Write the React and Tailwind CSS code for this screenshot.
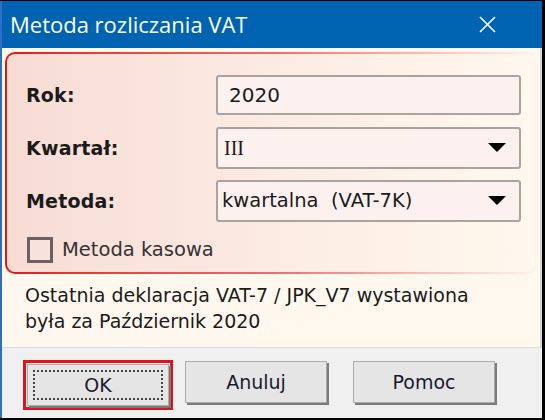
import React from "react";

const font = { fontFamily: "Tahoma, 'DejaVu Sans', sans-serif" };

function Arrow() {
  return (
    <svg width="18" height="10" viewBox="0 0 18 10" className="shrink-0">
      <polygon points="0,0 18,0 9,9" fill="#000" />
    </svg>
  );
}

function Field({ label, children, select, h }) {
  return (
    <div className={"flex items-center " + h}>
      <div className="w-[190px] text-[19px] font-bold text-[#1b1b1b] tracking-[0.2px]">{label}</div>
      <div className="flex items-center justify-between w-[305px] h-full border-2 border-[#a9a3a1] rounded-[3px] bg-[#fcf1ee] pl-[4px] pr-[13px]">
        {children}
        {select && <Arrow />}
      </div>
    </div>
  );
}

function Btn({ label, focused }) {
  const inner = (
    <div className="relative w-[142px] h-[42px] bg-[#e5e5e5] border border-[#adadad] shadow-[2px_2px_0_#7a7a7a] flex items-center justify-center text-[19px] text-[#1a1a2e]">
      {focused && (
        <div className="absolute inset-[5px] border-2 border-dotted border-[#444]" />
      )}
      <span className="relative">{label}</span>
    </div>
  );
  if (!focused) return inner;
  return <div className="border-[3px] border-[#e0121a] p-[1px]">{inner}</div>;
}

export default function App() {
  return (
    <div
      className="w-[545px] h-[420px] bg-black pt-[1px] pr-[3px] pb-[2px] flex flex-col"
      style={font}
    >
      <div className="flex-1 flex flex-col border-l-2 border-[#2d6fc2] bg-[#f0f0f0]">
        {/* title bar */}
        <div className="h-[47px] bg-[#0063b1] flex items-center justify-between pl-[8px] pr-[46px]">
          <span
            className="text-white text-[22px]"
            style={{ fontFamily: "'Segoe UI', 'Open Sans', 'Noto Sans', sans-serif" }}
          >
            Metoda rozliczania VAT
          </span>
          <svg width="17" height="17" viewBox="0 0 17 17">
            <path d="M1 1 L16 16 M16 1 L1 16" stroke="#fff" strokeWidth="1.6" />
          </svg>
        </div>

        {/* body */}
        <div className="h-[299px] bg-[#fff8ee] border-r-2 border-[#d9d6d0] pt-[4px] px-[3px]">
          <div className="rounded-[10px] p-[2px] bg-gradient-to-r from-[#e2141b] via-[#ef6a6a] to-[#fff3ea]">
            <div className="h-[218px] rounded-[8px] bg-gradient-to-r from-[#f7dcd4] via-[#fcebe3] to-[#fff8ee] pl-[19px] pt-[21px]">
              <div className="flex flex-col">
                <Field label="Rok:" h="h-[40px]">
                  <span className="text-[20px] text-[#1b1b1b] pl-[7px]">2020</span>
                </Field>
                <div className="h-[12px]" />
                <Field label="Kwartał:" select h="h-[42px]">
                  <span
                    className="text-[20px] text-[#1b1b1b] pl-[2px]"
                    style={{ fontFamily: "'Liberation Serif', serif" }}
                  >
                    III
                  </span>
                </Field>
                <div className="h-[11px]" />
                <Field label="Metoda:" select h="h-[42px]">
                  <span className="text-[19.5px] text-[#1b1b1b]">kwartalna&nbsp;&nbsp;(VAT-7K)</span>
                </Field>
              </div>
              <div className="flex items-center mt-[13px] ml-[1px]">
                <div className="w-[26px] h-[26px] border-[3px] border-[#6d5f60] bg-[#f8e2de]" />
                <span className="ml-[9px] text-[19.5px] text-[#333]">Metoda kasowa</span>
              </div>
            </div>
          </div>
          <div className="pl-[20px] pt-[8px] text-[19px] leading-[26px] text-[#1b1b1b]">
            <div>Ostatnia deklaracja VAT-7 / JPK_V7 wystawiona</div>
            <div>była za Październik 2020</div>
          </div>
        </div>

        {/* buttons */}
        <div className="flex-1 border-t border-[#dcdcdc] bg-[#f0f0f0] flex items-start pt-[12px] pl-[21px] gap-[12px]">
          <Btn label="OK" focused />
          <div className="pt-[1px] flex gap-[26px]">
            <Btn label="Anuluj" />
            <Btn label="Pomoc" />
          </div>
        </div>
      </div>
    </div>
  );
}
